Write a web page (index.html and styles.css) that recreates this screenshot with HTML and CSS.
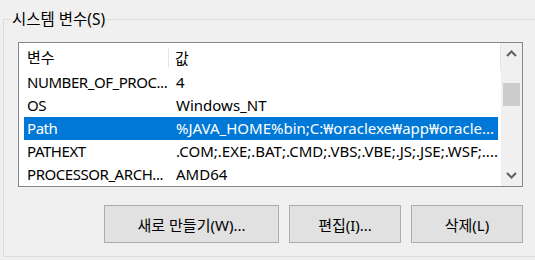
FILE: index.html
```html
<!DOCTYPE html>
<html lang="ko">
<head>
    <meta charset="UTF-8">
    <title>시스템 변수</title>
    <link rel="stylesheet" href="styles.css">
</head>
<body>

<fieldset class="group">
    <legend>시스템 변수(S)</legend>
    <div class="group-body">
        <div class="listview">
            <div class="list-main">
                <div class="list-header">
                    <div class="col col-name">변수</div>
                    <div class="col col-value">값</div>
                </div>
                <div class="row">
                    <div class="col col-name">NUMBER_OF_PROC...</div>
                    <div class="col col-value">4</div>
                </div>
                <div class="row">
                    <div class="col col-name">OS</div>
                    <div class="col col-value">Windows_NT</div>
                </div>
                <div class="row selected">
                    <div class="col col-name">Path</div>
                    <div class="col col-value">%JAVA_HOME%bin;C:₩oraclexe₩app₩oracle...</div>
                </div>
                <div class="row">
                    <div class="col col-name">PATHEXT</div>
                    <div class="col col-value">.COM;.EXE;.BAT;.CMD;.VBS;.VBE;.JS;.JSE;.WSF;....</div>
                </div>
                <div class="row">
                    <div class="col col-name">PROCESSOR_ARCH...</div>
                    <div class="col col-value">AMD64</div>
                </div>
            </div>
            <div class="scrollbar">
                <div class="scroll-btn">
                    <svg width="11" height="7" viewBox="0 0 11 7"><path d="M1 6 L5.5 1.5 L10 6" fill="none" stroke="#606060" stroke-width="2"/></svg>
                </div>
                <div class="scroll-track">
                    <div class="scroll-thumb"></div>
                </div>
                <div class="scroll-btn">
                    <svg width="11" height="7" viewBox="0 0 11 7"><path d="M1 1 L5.5 5.5 L10 1" fill="none" stroke="#606060" stroke-width="2"/></svg>
                </div>
            </div>
        </div>

        <div class="buttons">
            <button class="btn btn-wide">새로 만들기(W)...</button>
            <button class="btn">편집(I)...</button>
            <button class="btn">삭제(L)</button>
        </div>
    </div>
</fieldset>

</body>
</html>
```

FILE: styles.css
```css
body {
    font-family: "Segoe UI", "Noto Sans", "Noto Sans CJK KR", sans-serif;
    font-size: 15px;
    background-color: #f0f0f0;
    color: #000;
    margin: 0;
    padding: 0;
    overflow: hidden;
    width: 535px;
    height: 260px;
}
.group {
    margin: 9px 0 0 3px;
    padding: 0;
    width: 532px;
    height: 248px;
    box-sizing: border-box;
    border: 1px solid #dcdcdc;
    border-right: none;
}
.group legend {
    margin-left: 7px;
    padding: 0 1px;
    line-height: 20px;
    font-size: 15.5px;
}
.group-body {
    padding: 13px 0 0 14px;
}
.listview {
    display: flex;
    width: 505px;
    height: 145px;
    box-sizing: border-box;
    border: 1px solid #828790;
    background-color: #fff;
}
.list-main {
    flex: 1;
    overflow: hidden;
}
.list-header {
    display: flex;
    height: 28px;
    align-items: center;
    border-right: 1px solid #e5e5e5;
    box-sizing: border-box;
}
.list-header .col-name {
    width: 150px;
    padding-left: 8px;
    height: 19px;
    line-height: 19px;
    border-right: 1px solid #e5e5e5;
}
.list-header .col-value {
    padding-left: 6px;
}
.col {
    white-space: nowrap;
    overflow: hidden;
    box-sizing: border-box;
}
.row {
    display: flex;
    height: 23px;
    line-height: 23px;
    margin-left: 5px;
    width: 474px;
}
.row .col-name {
    width: 145px;
    padding-left: 3px;
    overflow: visible;
    letter-spacing: -0.45px;
}
.row .col-value {
    flex: 1;
    padding-left: 7px;
}
.row.selected {
    background-color: #0078d7;
    color: #fff;
}
.scrollbar {
    width: 21px;
    display: flex;
    flex-direction: column;
    background-color: #f0f0f0;
}
.scroll-btn {
    height: 21px;
    display: flex;
    align-items: center;
    justify-content: center;
}
.scroll-track {
    flex: 1;
}
.scroll-thumb {
    margin: 19px 2px 0 2px;
    height: 23px;
    background-color: #cdcdcd;
}
.buttons {
    display: flex;
    justify-content: flex-end;
    gap: 10px;
    width: 505px;
    margin-top: 18px;
}
.btn {
    font-family: inherit;
    font-size: 15px;
    color: #000;
    width: 112px;
    height: 38px;
    padding: 0;
    background-color: #e1e1e1;
    border: 1px solid #adadad;
    border-radius: 0;
}
.btn-wide {
    width: 175px;
}
```
